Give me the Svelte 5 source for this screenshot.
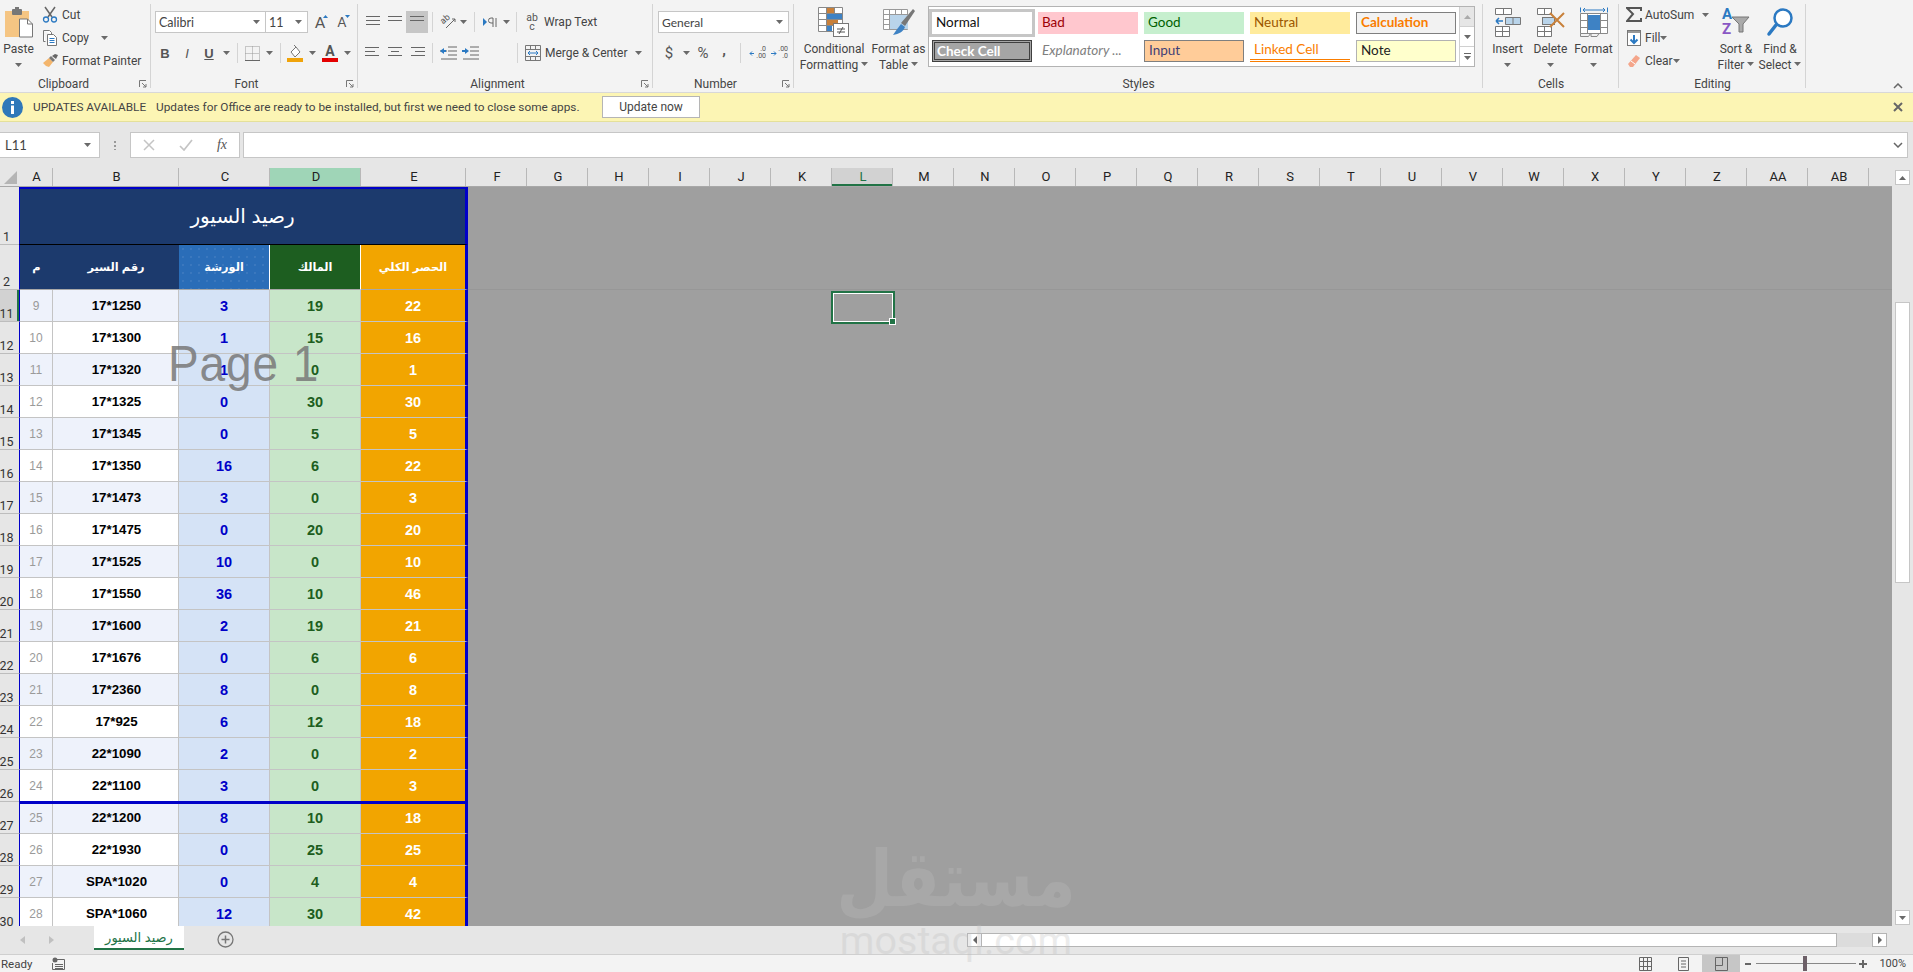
<script>
	const cols = [
		{ n: 'A', w: 34 },
		{ n: 'B', w: 126 },
		{ n: 'C', w: 91 },
		{ n: 'D', w: 91, cls: 'on' },
		{ n: 'E', w: 105 }
	];
	const rest = 'F G H I J K L M N O P Q R S T U V W X Y Z AA AB'.split(' ');

	const rows = [
		[11, 9, '17*1250', 3, 19, 22],
		[12, 10, '17*1300', 1, 15, 16],
		[13, 11, '17*1320', 1, 0, 1],
		[14, 12, '17*1325', 0, 30, 30],
		[15, 13, '17*1345', 0, 5, 5],
		[16, 14, '17*1350', 16, 6, 22],
		[17, 15, '17*1473', 3, 0, 3],
		[18, 16, '17*1475', 0, 20, 20],
		[19, 17, '17*1525', 10, 0, 10],
		[20, 18, '17*1550', 36, 10, 46],
		[21, 19, '17*1600', 2, 19, 21],
		[22, 20, '17*1676', 0, 6, 6],
		[23, 21, '17*2360', 8, 0, 8],
		[24, 22, '17*925', 6, 12, 18],
		[25, 23, '22*1090', 2, 0, 2],
		[26, 24, '22*1100', 3, 0, 3],
		[27, 25, '22*1200', 8, 10, 18],
		[28, 26, '22*1930', 0, 25, 25],
		[29, 27, 'SPA*1020', 0, 4, 4],
		[30, 28, 'SPA*1060', 12, 30, 42]
	];
</script>

{#snippet caret()}
	<svg class="caret" width="7" height="4" viewBox="0 0 7 4"><path d="M0 0h7L3.500 4z" fill="#6a6a6a" /></svg>
{/snippet}

{#snippet launcher()}
	<svg class="launch" width="8" height="8" viewBox="0 0 8 8">
		<path d="M.5 7V.5H7M3 3l4 4M7 4v3H4" fill="none" stroke="#777" />
	</svg>
{/snippet}

{#snippet lines(ws, anchor)}
	<svg width="18" height="14" viewBox="0 0 18 14">
		{#each ws as w, i}
			<rect x={anchor === 'l' ? 1 : anchor === 'r' ? 17 - w : 9 - w / 2} y={1 + i * 4} width={w} height="1" fill="#666" />
		{/each}
	</svg>
{/snippet}

<div class="app">
	<div class="ribbon">
		<section class="group" style="width:151px">
			<div class="body clip">
				<div class="big paste">
					<svg width="30" height="31" viewBox="0 0 30 31">
						<rect x="1" y="4" width="24" height="26" fill="#f5c583" />
						<rect x="8" y="2" width="10" height="6" rx="1" fill="#777" />
						<rect x="11" y="0" width="4" height="3" fill="#777" />
						<path d="M15.500 12h8l5 5v13h-13z" fill="#fff" stroke="#777" />
						<path d="M23.500 12v5h5" fill="none" stroke="#777" />
					</svg>
					<span>Paste</span>
					{@render caret()}
				</div>
				<div class="stack">
					<div class="row">
						<span class="mini">
							<svg width="16" height="17" viewBox="0 0 16 17">
								<path d="M3 1l7 10M13 1L6 11" stroke="#666" stroke-width="1.500" fill="none" />
								<circle cx="4" cy="13.500" r="2.500" fill="none" stroke="#2b79c2" stroke-width="1.300" />
								<circle cx="12" cy="13.500" r="2.500" fill="none" stroke="#2b79c2" stroke-width="1.300" />
							</svg>
						</span>
						<span>Cut</span>
					</div>
					<div class="row">
						<span class="mini">
							<svg width="16" height="16" viewBox="0 0 16 16">
								<path d="M1.500.500h6l2 2v2M3.500 11.500h-2V.500" fill="#fff" stroke="#777" />
								<path d="M5.500 4.500h6l3 3v8h-9z" fill="#fff" stroke="#777" />
								<path d="M7.500 8.500h5M7.500 10.500h5M7.500 12.500h5" stroke="#2b79c2" />
							</svg>
						</span>
						<span>Copy</span>
						<span class="gap">{@render caret()}</span>
					</div>
					<div class="row">
						<span class="mini">
							<svg width="17" height="15" viewBox="0 0 17 15">
								<path d="M1 10l6-5 4 4-4 5-3-1z" fill="#f3b56c" />
								<path d="M7 5l2-2 4 4-2 2z" fill="#777" />
								<path d="M10 3l3-2 3 1-2 4z" fill="#666" />
							</svg>
						</span>
						<span>Format Painter</span>
					</div>
				</div>
			</div>
			<div class="label clip-label">Clipboard{@render launcher()}</div>
		</section>

		<section class="group" style="width:207px">
			<div class="body tools">
				<div class="row">
					<div class="combo fontname"><span>Calibri</span>{@render caret()}</div>
					<div class="combo fontsize"><span>11</span>{@render caret()}</div>
					<span class="ib grow">A<svg width="5" height="3" viewBox="0 0 5 3"><path d="M0 3h5L2.500 0z" fill="#2b79c2" /></svg></span>
					<span class="ib grow small">A<svg width="5" height="3" viewBox="0 0 5 3"><path d="M0 0h5L2.500 3z" fill="#2b79c2" /></svg></span>
				</div>
				<div class="row shift">
					<span class="ib b">B</span>
					<span class="ib i">I</span>
					<span class="ib u">U</span>
					<span class="cw">{@render caret()}</span>
					<i class="sep"></i>
					<span class="ib mr3">
						<svg width="15" height="15" viewBox="0 0 15 15"><path d="M.500.500h14v14H.500zM7.500.500v14M.500 7.500h14" fill="none" stroke="#999" stroke-dasharray="1 1" /><path d="M0 14.500h15" stroke="#666" /></svg>
					</span>
					<span class="cw">{@render caret()}</span>
					<i class="sep"></i>
					<span class="ib mr3">
						<svg width="17" height="18" viewBox="0 0 17 18">
							<path d="M4 8l5-5 4 5-5 5z" fill="#fff" stroke="#777" />
							<path d="M9 3L7 1" stroke="#777" />
							<rect y="14" width="16" height="4" fill="#f0a30a" />
						</svg>
					</span>
					<span class="cw">{@render caret()}</span>
					<span class="ib ml1 color">A<i></i></span>
					<span class="cw">{@render caret()}</span>
				</div>
			</div>
			<div class="label launched">Font{@render launcher()}</div>
		</section>

		<section class="group" style="width:295px">
			<div class="body tools al">
				<div class="row">
					<span class="ib">{@render lines([14, 14, 14], 'c')}</span>
					<span class="ib">{@render lines([14, 14], 'c')}</span>
					<span class="ib active">{@render lines([14, 14], 'c')}</span>
					<i class="sep s4"></i>
					<span class="ib orient">
						<span class="ab">ab</span>
						<svg width="17" height="16" viewBox="0 0 17 16">
							<path d="M6 14L15 5M15 5h-3M15 5v3" stroke="#666" fill="none" />
						</svg>
					</span>
					<span class="cs">{@render caret()}</span>
					<i class="sep s7"></i>
					<span class="ib">
						<svg width="14" height="11" viewBox="0 0 14 11">
							<path d="M0 1l4 4-4 4z" fill="#2b79c2" />
							<path d="M10 1v9M13 1v9M10 1H8a2 2 0 0 0 0 5h2" fill="none" stroke="#666" />
						</svg>
					</span>
					<span class="cs2">{@render caret()}</span>
					<i class="sep s6"></i>
					<span class="ib abc">ab<br />c</span>
					<span class="tx">Wrap Text</span>
				</div>
				<div class="row">
					<span class="ib">{@render lines([14, 10, 14], 'l')}</span>
					<span class="ib">{@render lines([14, 8, 14], 'c')}</span>
					<span class="ib">{@render lines([14, 10, 14], 'r')}</span>
					<i class="sep s4"></i>
					<span class="ib">
						<svg width="17" height="14" viewBox="0 0 17 14">
							<path d="M8 1h9M8 5h9M8 9h9M1 13h16M0 5h7" stroke="#666" fill="none" />
							<path d="M0 5l4-3v6z" fill="#2b79c2" />
							<path d="M1 5h5" stroke="#2b79c2" stroke-width="2" />
						</svg>
					</span>
					<span class="ib">
						<svg width="17" height="14" viewBox="0 0 17 14">
							<path d="M8 1h9M8 5h9M8 9h9M1 13h16" stroke="#666" fill="none" />
							<path d="M7 5L3 2v6z" fill="#2b79c2" />
							<path d="M0 5h5" stroke="#2b79c2" stroke-width="2" />
						</svg>
					</span>
					<i class="sep s36"></i>
					<span class="ib">
						<svg width="16" height="16" viewBox="0 0 16 16">
							<path d="M.500.500h15v15H.500zM.500 4.500h15M.500 11.500h15M5.500.500v4M10.500.500v4M5.500 11.500v4M10.500 11.500v4" fill="none" stroke="#777" />
							<path d="M3 8h10M3 8l2-2M3 8l2 2M13 8l-2-2M13 8l-2 2" stroke="#2b79c2" fill="none" />
						</svg>
					</span>
					<span class="tx">Merge &amp; Center</span>
					<span class="cm">{@render caret()}</span>
				</div>
			</div>
			<div class="label launched">Alignment{@render launcher()}</div>
		</section>

		<section class="group" style="width:141px">
			<div class="body tools num">
				<div class="row">
					<div class="combo general"><span>General</span>{@render caret()}</div>
				</div>
				<div class="row">
					<span class="ib sym">$</span>
					<span class="cw">{@render caret()}</span>
					<span class="ib sym">%</span>
					<span class="ib sym comma">,</span>
					<i class="sep s5"></i>
					<span class="ib dec">
						<span class="dd"><b>.0</b><b>.00</b></span>
						<svg width="6" height="7" viewBox="0 0 6 7"><path d="M5 3.500H1M1 3.500l2-2M1 3.500l2 2" stroke="#2b79c2" fill="none" /></svg>
					</span>
					<span class="ib dec">
						<span class="dd"><b>.00</b><b>.0</b></span>
						<svg width="6" height="7" viewBox="0 0 6 7"><path d="M0 3.500h5M5 3.500l-2-2M5 3.500l-2 2" stroke="#2b79c2" fill="none" /></svg>
					</span>
				</div>
			</div>
			<div class="label launched">Number{@render launcher()}</div>
		</section>

		<section class="group" style="width:689px">
			<div class="body styles">
				<div class="big cf">
					<svg width="32" height="31" viewBox="0 0 32 31">
						<path d="M.500.500h24v24H.500zM.500 6.500h24M.500 12.500h24M.500 18.500h24M8.500.500v24M16.500.500v24" fill="#fff" stroke="#888" />
						<rect x="9" y="1" width="7" height="5" fill="#c8803a" />
						<rect x="9" y="7" width="15" height="5" fill="#3e82c4" />
						<rect x="9" y="13" width="11" height="5" fill="#c8803a" />
						<rect x="9" y="19" width="5" height="5" fill="#3e82c4" />
						<rect x="15.500" y="16.500" width="15" height="13" fill="#fff" stroke="#777" />
						<path d="M19 22h8M19 25h8M25 20l-4 7" stroke="#555" fill="none" />
					</svg>
					<span>Conditional</span>
					<span>Formatting {@render caret()}</span>
				</div>
				<div class="big ft">
					<svg width="32" height="31" viewBox="0 0 32 31">
						<path d="M.500 2.500h24v20H.500zM.500 7.500h24M.500 12.500h24M.500 17.500h24M6.500 2.500v20M12.500 2.500v20M18.500 2.500v20" fill="#fff" stroke="#999" />
						<rect x="7" y="8" width="18" height="14" fill="#b9d4ea" />
						<path d="M30 2l2 2-10 15-4-3z" fill="#777" />
						<path d="M18 17l4 3c-2 5-6 7-12 8 2-3 4-6 8-11z" fill="#3e82c4" />
					</svg>
					<span>Format as</span>
					<span>Table {@render caret()}</span>
				</div>
				<div class="gallery">
					<div class="swatches">
						<div class="sw normal">Normal</div>
						<div class="sw bad">Bad</div>
						<div class="sw good">Good</div>
						<div class="sw neutral">Neutral</div>
						<div class="sw calc">Calculation</div>
						<div class="sw check">Check Cell</div>
						<div class="sw expl">Explanatory ...</div>
						<div class="sw input">Input</div>
						<div class="sw linked">Linked Cell</div>
						<div class="sw note">Note</div>
					</div>
					<div class="spin">
						<span class="off"><svg width="7" height="4" viewBox="0 0 7 4"><path d="M0 4h7L3.500 0z" fill="#aaa" /></svg></span>
						<span>{@render caret()}</span>
						<span class="more"><i></i>{@render caret()}</span>
					</div>
				</div>
			</div>
			<div class="label">Styles</div>
		</section>

		<section class="group" style="width:136px">
			<div class="body cells">
				<div class="big">
					<svg width="28" height="31" viewBox="0 0 28 31">
						<path d="M1.500 1.500h16v6h-16zM9.500 1.500v6M1.500 19.500h14v10h-14zM1.500 24.500h14M8.500 19.500v10" fill="#fff" stroke="#777" />
						<path d="M11.500 10.500h15v7h-15zM19 10.500v7" fill="#b9d4ea" stroke="#777" />
						<path d="M9 14H2M2 14l3-3M2 14l3 3" stroke="#2b79c2" stroke-width="1.500" fill="none" />
					</svg>
					<span>Insert</span>
					{@render caret()}
				</div>
				<div class="big">
					<svg width="30" height="31" viewBox="0 0 30 31">
						<path d="M1.500 1.500h14v6h-14zM8.500 1.500v6M1.500 19.500h14v10h-14zM1.500 24.500h14M8.500 19.500v10" fill="#fff" stroke="#777" />
						<rect x="6.500" y="10.500" width="12" height="7" fill="#b9d4ea" stroke="#777" />
						<path d="M14 6l14 14M28 6L14 20" stroke="#c8803a" stroke-width="2" />
					</svg>
					<span>Delete</span>
					{@render caret()}
				</div>
				<div class="big">
					<svg width="28" height="31" viewBox="0 0 28 31">
						<path d="M.500.500v5M27.500.500v5M3 3h22M3 3l2-2M3 3l2 2M25 3l-2-2M25 3l-2 2" stroke="#2b79c2" fill="none" />
						<path d="M.500 6.500h27v20H.500zM.500 13.500h27M.500 20.500h27M7.500 6.500v20M20.500 6.500v20" fill="#fff" stroke="#888" />
						<rect x="8" y="8" width="12" height="15" fill="#3e82c4" />
						<path d="M.500 26.500v3h8l2-3M11 26.500v3h6l2-3" fill="none" stroke="#888" />
					</svg>
					<span>Format</span>
					{@render caret()}
				</div>
			</div>
			<div class="label">Cells</div>
		</section>

		<section class="group" style="width:187px">
			<div class="body edit">
				<div class="stack">
					<div class="row">
						<span class="mini tight">
							<svg width="16" height="15" viewBox="0 0 16 15"><path d="M15 4V1H1l6 6-6 7h14v-3" fill="none" stroke="#555" stroke-width="2" /></svg>
						</span>
						<span>AutoSum</span>
						<span class="gap auto">{@render caret()}</span>
					</div>
					<div class="row">
						<span class="mini tight">
							<svg width="14" height="16" viewBox="0 0 14 16">
								<rect x=".500" y=".500" width="13" height="15" fill="#fff" stroke="#777" />
								<path d="M1 1h12v2H1z" fill="#999" />
								<path d="M7 5v8M3.500 9.500L7 13l3.500-3.500" stroke="#2b79c2" stroke-width="2" fill="none" />
							</svg>
						</span>
						<span>Fill</span>
						{@render caret()}
					</div>
					<div class="row">
						<span class="mini tight">
							<svg width="14" height="14" viewBox="0 0 14 14"><path d="M1 10l8-9 4 3-7 9-3 0z" fill="#f4a58a" /><path d="M4 7l4 3" stroke="#fff" /></svg>
						</span>
						<span>Clear</span>
						{@render caret()}
					</div>
				</div>
				<div class="big sort">
					<div class="az">
						<span class="azl"><b class="a">A</b><b class="z">Z</b></span>
						<svg width="19" height="17" viewBox="0 0 19 17"><path d="M1 1h17l-6 7v8h-4V8z" fill="#aaa" stroke="#777" /></svg>
					</div>
					<span>Sort &amp;</span>
					<span>Filter {@render caret()}</span>
				</div>
				<div class="big find">
					<svg width="28" height="31" viewBox="0 0 28 31">
						<circle cx="17" cy="11" r="8.500" fill="#fff" stroke="#2b79c2" stroke-width="2.500" />
						<path d="M10 18l-7 9" stroke="#2b79c2" stroke-width="3.500" stroke-linecap="round" />
					</svg>
					<span>Find &amp;</span>
					<span>Select {@render caret()}</span>
				</div>
			</div>
			<div class="label">Editing</div>
		</section>

		<div class="collapse">
			<svg width="10" height="6" viewBox="0 0 10 6"><path d="M1 5l4-4 4 4" fill="none" stroke="#666" stroke-width="1.500" /></svg>
		</div>
	</div>

	<div class="msgbar">
		<svg class="info" width="21" height="21" viewBox="0 0 21 21">
			<circle cx="10.500" cy="10.500" r="10.500" fill="#2f78b9" />
			<rect x="9" y="4" width="3" height="3" fill="#fff" />
			<rect x="9" y="8.500" width="3" height="8.500" fill="#fff" />
		</svg>
		<span class="head">UPDATES AVAILABLE</span>
		<span class="msg">Updates for Office are ready to be installed, but first we need to close some apps.</span>
		<span class="update">Update now</span>
		<svg class="close" width="10" height="10" viewBox="0 0 10 10"><path d="M1 1l8 8M9 1L1 9" stroke="#666" stroke-width="2" /></svg>
	</div>

	<div class="fbar">
		<div class="namebox"><span>L11</span>{@render caret()}</div>
		<span class="dots"></span>
		<div class="fxbox">
			<svg width="12" height="12" viewBox="0 0 12 12"><path d="M1 1l10 10M11 1L1 11" stroke="#c4c4c4" stroke-width="1.500" /></svg>
			<svg width="14" height="12" viewBox="0 0 14 12"><path d="M1 7l4 4 8-10" fill="none" stroke="#c4c4c4" stroke-width="1.700" /></svg>
			<span class="fx">fx</span>
		</div>
		<div class="finput">
			<svg width="10" height="6" viewBox="0 0 10 6"><path d="M1 1l4 4 4-4" fill="none" stroke="#666" stroke-width="1.500" /></svg>
		</div>
	</div>

	<div class="main">
		<div class="sheet">
			<div class="colhead">
				<div class="corner"><svg width="13" height="13" viewBox="0 0 13 13"><path d="M13 0v13H0z" fill="#b5b5b5" /></svg></div>
				{#each cols as c}
					<div class="ch {c.cls ?? ''}" style="width:{c.w}px">{c.n}</div>
				{/each}
				{#each rest as c}
					<div class="ch wide" class:sel={c === 'L'}>{c}</div>
				{/each}
			</div>
			<div class="gridwrap">
				<div class="grid">
					<div class="rh">1</div>
					<div class="title">رصيد السيور</div>

					<div class="rh">2</div>
					<div class="th navy">م</div>
					<div class="th navy">رقم السير</div>
					<div class="th blue">الورشة</div>
					<div class="th green">المالك</div>
					<div class="th orange">الحصر الكلي</div>

					{#each rows as r, i}
						<div class="rh" class:cur={r[0] === 11}>{r[0]}</div>
						<div class="c idx" class:tint={i % 2 === 0}>{r[1]}</div>
						<div class="c code" class:tint={i % 2 === 0}>{r[2]}</div>
						<div class="c wks">{r[3]}</div>
						<div class="c own">{r[4]}</div>
						<div class="c tot">{r[5]}</div>
					{/each}
				</div>
				<div class="pagemark">Page 1</div>
				<div class="pagebreak"></div>

				<div class="rest">
					<div class="hline"></div>
					<div class="selcell"><i></i></div>
				</div>
			</div>
		</div>
		<div class="vscroll">
			<span class="sbtn"><svg width="7" height="4" viewBox="0 0 7 4"><path d="M0 4h7L3.500 0z" fill="#666" /></svg></span>
			<span class="vthumb"></span>
			<span class="sbtn down">{@render caret()}</span>
		</div>
	</div>

	<div class="tabs">
		<svg class="nav" width="5" height="8" viewBox="0 0 5 8"><path d="M5 0v8L0 4z" fill="#c0c0c0" /></svg>
		<svg class="nav next" width="5" height="8" viewBox="0 0 5 8"><path d="M0 0v8l5-4z" fill="#c0c0c0" /></svg>
		<div class="tab">رصيد السيور</div>
		<svg class="add" width="17" height="17" viewBox="0 0 17 17">
			<circle cx="8.500" cy="8.500" r="7.500" fill="none" stroke="#777" stroke-width="1.300" />
			<path d="M4.500 8.500h8M8.500 4.500v8" stroke="#777" stroke-width="1.500" />
		</svg>
		<div class="hscroll">
			<span class="hbtn"><svg width="4" height="8" viewBox="0 0 4 8"><path d="M4 0v8L0 4z" fill="#666" /></svg></span>
			<span class="hthumb"></span>
			<span class="hbtn end"><svg width="4" height="8" viewBox="0 0 4 8"><path d="M0 0v8l4-4z" fill="#666" /></svg></span>
		</div>
	</div>

	<div class="status">
		<span class="ready">Ready</span>
		<svg class="macro" width="13" height="13" viewBox="0 0 13 13">
			<circle cx="3" cy="3" r="2.500" fill="#666" />
			<path d="M5 2.500h7.500v10H.500V6M3 7.500h8M3 9.500h8M3 11.500h8" fill="none" stroke="#666" />
		</svg>
		<div class="views">
			<span class="view">
				<svg width="13" height="14" viewBox="0 0 13 14"><path d="M.500.500h12v13H.500zM.500 4.500h12M.500 9.500h12M4.500.500v13M8.500.500v13" fill="none" stroke="#666" /></svg>
			</span>
			<span class="view">
				<svg width="11" height="14" viewBox="0 0 11 14"><path d="M.500.500h10v13H.500zM3 4h5M3 7h5M3 10h5" fill="none" stroke="#666" /></svg>
			</span>
			<span class="view on">
				<svg width="13" height="14" viewBox="0 0 13 14"><path d="M.500.500h12v13H.500zM.500 8.500h7v-8" fill="none" stroke="#666" /></svg>
			</span>
		</div>
		<div class="zoom">
			<i class="zm"></i>
			<span class="slider"><i></i></span>
			<i class="zp"></i>
		</div>
		<span class="pct">100%</span>
	</div>

	<div class="stamp">
		<div class="stamp-ar"><span>مستقل</span></div>
		<div class="stamp-en">mostaql.com</div>
	</div>
</div>

<style>
	:global(body) {
		margin: 0;
	}
	.app {
		position: relative;
		display: flex;
		flex-direction: column;
		width: 1913px;
		height: 972px;
		overflow: hidden;
		background: #f3f3f3;
		font-family: Roboto, 'Liberation Sans', sans-serif;
		font-size: 12px;
		color: #444;
	}

	/* ribbon */
	.ribbon {
		display: flex;
		flex: none;
		height: 92px;
		background: #f3f3f3;
		position: relative;
	}
	.group {
		position: relative;
		flex: none;
		height: 92px;
	}
	.group::after {
		content: '';
		position: absolute;
		right: 0;
		top: 4px;
		bottom: 4px;
		width: 1px;
		background: #d4d4d4;
	}
	.body {
		height: 76px;
		box-sizing: border-box;
	}
	.label {
		height: 16px;
		line-height: 16px;
		text-align: center;
		color: #444;
	}
	.launched {
		padding-right: 16px;
	}
	.clip-label {
		padding-right: 24px;
	}
	.launch {
		position: absolute;
		right: 4px;
		bottom: 4px;
	}
	.row {
		display: flex;
		align-items: center;
		white-space: nowrap;
	}
	.caret {
		display: inline-block;
		vertical-align: middle;
		flex: none;
	}
	.big {
		display: flex;
		flex-direction: column;
		align-items: center;
		flex: none;
		line-height: 16px;
		white-space: nowrap;
	}
	.big svg:first-child {
		margin-bottom: 3px;
		flex: none;
	}
	.big > .caret {
		margin-top: 6px;
	}
	.stack {
		display: flex;
		flex-direction: column;
		padding-top: 3px;
	}
	.stack .row {
		height: 23px;
	}
	.mini {
		display: flex;
		justify-content: center;
		width: 18px;
		margin-right: 3px;
	}
	.gap {
		margin-left: 12px;
		display: flex;
	}

	.clip {
		display: flex;
		padding-top: 7px;
	}
	.paste {
		width: 37px;
	}
	.clip .stack {
		margin-left: 4px;
		padding-top: 0;
		margin-top: -4px;
	}

	.tools {
		padding: 11px 0 0 4px;
		display: flex;
		flex-direction: column;
		gap: 9px;
	}
	.tools .row {
		height: 22px;
	}
	.shift {
		margin-left: -1px;
	}
	.combo {
		display: flex;
		align-items: center;
		justify-content: space-between;
		box-sizing: border-box;
		height: 22px;
		padding: 0 5px 0 3px;
		background: #fff;
		border: 1px solid #c6c6c6;
		font-family: Lato, sans-serif;
		font-size: 12.500px;
		color: #444;
	}
	.fontname {
		width: 111px;
	}
	.fontsize {
		width: 42px;
		border-left: none;
		margin-right: 1px;
	}
	.general {
		width: 131px;
		font-size: 12px;
	}
	.ib {
		position: relative;
		display: flex;
		align-items: center;
		justify-content: center;
		flex: none;
		width: 22px;
		height: 22px;
		font-size: 14px;
		color: #555;
	}
	.grow {
		font-size: 15px;
		font-family: Lato, sans-serif;
	}
	.grow.small {
		font-size: 13px;
	}
	.grow svg {
		position: absolute;
		right: 3px;
		top: 4px;
	}
	.b {
		font-weight: 700;
		font-family: 'Liberation Sans', sans-serif;
		font-size: 13px;
	}
	.i {
		font-style: italic;
		font-family: 'Liberation Sans', sans-serif;
		font-size: 13px;
	}
	.u {
		font-weight: 700;
		text-decoration: underline;
		font-family: 'Liberation Sans', sans-serif;
		font-size: 13px;
	}
	.cw {
		display: flex;
		justify-content: center;
		width: 12px;
		flex: none;
	}
	.sep {
		flex: none;
		width: 1px;
		height: 20px;
		background: #d4d4d4;
		margin: 0 3px 0 5px;
	}
	.mr3 {
		margin-right: 3px;
	}
	.sep + .mr3 {
		margin-right: 0;
	}
	.ml1 {
		margin-left: 1px;
	}
	.color {
		flex-direction: column;
		font-weight: 700;
		font-size: 14px;
		line-height: 13px;
	}
	.color i {
		width: 16px;
		height: 4px;
		background: #e40000;
		display: block;
	}
	.active {
		background: #c6c6c6;
	}
	.s4 {
		margin: 0 4px;
	}
	.s5 {
		margin: 0 3px 0 5px;
	}
	.s6 {
		margin: 0 4px 0 5px;
	}
	.s7 {
		margin: 0 4px 0 6px;
	}
	.s36 {
		margin: 0 4px 0 36px;
	}
	.cs {
		display: flex;
		justify-content: center;
		width: 9px;
		flex: none;
	}
	.cs2 {
		display: flex;
		justify-content: center;
		width: 10px;
		flex: none;
	}
	.orient .ab {
		position: absolute;
		left: 3px;
		top: 3px;
		font-size: 9px;
		line-height: 10px;
		transform: rotate(-40deg);
	}
	.abc {
		font-size: 10.500px;
		line-height: 9px;
		display: block;
		padding-top: 2px;
		box-sizing: border-box;
		text-align: center;
	}
	.tx {
		margin-left: 1px;
	}
	.cm {
		margin-left: 8px;
		display: flex;
	}
	.al {
		padding-left: 4px;
	}
	.num {
		padding-left: 5px;
	}
	.sym {
		font-size: 15px;
	}
	.comma {
		margin-left: -1px;
		font-weight: 700;
		padding-bottom: 6px;
		box-sizing: border-box;
	}
	.dec {
		justify-content: flex-start;
		flex-direction: row-reverse;
		gap: 1px;
	}
	.dd {
		display: flex;
		flex-direction: column;
		align-items: flex-end;
		font-size: 7px;
		line-height: 7px;
	}
	.dd b {
		font-weight: 400;
	}

	.styles {
		display: flex;
		padding: 7px 0 0 5px;
	}
	.cf {
		width: 70px;
	}
	.ft {
		width: 59px;
	}
	.gallery {
		display: flex;
		box-sizing: border-box;
		width: 547px;
		height: 61px;
		margin-top: -1px;
		background: #fff;
		border: 1px solid #b3b3b3;
	}
	.swatches {
		display: grid;
		grid-template-columns: repeat(5, 100px);
		grid-auto-rows: 22px;
		gap: 6px;
		padding: 5px 0 0 3px;
	}
	.sw {
		box-sizing: border-box;
		display: flex;
		align-items: center;
		padding: 0 0 2px 4px;
		font-family: Lato, sans-serif;
		font-size: 13.500px;
		white-space: nowrap;
	}
	.normal {
		color: #111;
		outline: 3px solid #c6c6c6;
		margin-left: 0;
		width: 100px;
	}
	.bad {
		background: #ffc7ce;
		color: #9c0006;
	}
	.good {
		background: #c6efce;
		color: #006100;
	}
	.neutral {
		background: #ffeb9c;
		color: #9c5700;
	}
	.calc {
		background: #f2f2f2;
		color: #fa7d00;
		font-weight: 700;
		border: 1px solid #7f7f7f;
	}
	.check {
		background: #a5a5a5;
		color: #fff;
		font-weight: 700;
		border: 3px double #3f3f3f;
		padding: 0 0 0 2px;
	}
	.expl {
		color: #7f7f7f;
		font-style: italic;
	}
	.input {
		background: #ffcc99;
		color: #3f3f76;
		border: 1px solid #7f7f7f;
	}
	.linked {
		color: #fa7d00;
		border-bottom: 3px double #fa7d00;
	}
	.note {
		background: #ffffcc;
		color: #222;
		border: 1px solid #b2b2b2;
	}
	.spin {
		display: flex;
		flex-direction: column;
		width: 14px;
		margin-left: auto;
		border-left: 1px solid #d0d0d0;
	}
	.spin span {
		flex: 1;
		display: flex;
		flex-direction: column;
		align-items: center;
		justify-content: center;
		border-bottom: 1px solid #d0d0d0;
	}
	.spin .off {
		background: #e6e6e6;
	}
	.spin .more {
		border-bottom: none;
		gap: 2px;
	}
	.more i {
		width: 7px;
		height: 1px;
		background: #666;
	}

	.cells {
		display: flex;
		padding: 7px 0 0 3px;
	}
	.cells .big {
		width: 43px;
	}

	.edit {
		display: flex;
		padding-left: 6px;
	}
	.edit .stack {
		width: 89px;
	}
	.tight {
		margin-right: 2px;
	}
	.auto {
		margin-left: 8px;
	}
	.sort,
	.find {
		width: 44px;
		padding-top: 7px;
	}
	.az {
		display: flex;
		align-items: flex-start;
		height: 31px;
		margin-bottom: 3px;
	}
	.az svg {
		margin-top: 9px;
		margin-left: -1px;
	}
	.azl {
		display: flex;
		flex-direction: column;
		font-size: 15px;
		line-height: 15px;
	}
	.a {
		color: #2b79c2;
	}
	.z {
		color: #8a57c4;
	}
	.collapse {
		margin-left: 87px;
		padding-top: 78px;
	}

	/* message bar */
	.msgbar {
		display: flex;
		align-items: center;
		flex: none;
		box-sizing: border-box;
		height: 30px;
		padding-left: 2px;
		background: #fcf5b4;
		border-top: 1px solid #d8d8d8;
		border-bottom: 1px solid #e4e09a;
		color: #444;
	}
	.info {
		flex: none;
	}
	.head {
		margin-left: 10px;
		font-size: 11.800px;
	}
	.msg {
		margin-left: 10px;
		width: 446px;
		font-size: 11.800px;
		white-space: nowrap;
	}
	.update {
		box-sizing: border-box;
		width: 98px;
		height: 22px;
		line-height: 20px;
		text-align: center;
		background: #fff;
		border: 1px solid #b5b5b5;
	}
	.close {
		margin-left: auto;
		margin-right: 10px;
	}

	/* formula bar */
	.fbar {
		display: flex;
		align-items: flex-start;
		flex: none;
		box-sizing: border-box;
		height: 46px;
		padding-top: 10px;
		background: #e6e6e6;
	}
	.namebox {
		display: flex;
		align-items: center;
		justify-content: space-between;
		box-sizing: border-box;
		width: 100px;
		height: 26px;
		padding: 0 8px 0 5px;
		background: #fff;
		border: 1px solid #c6c6c6;
		border-left: none;
		font-family: Lato, sans-serif;
		font-size: 13px;
	}
	.dots {
		width: 2px;
		height: 10px;
		margin: 8px 14px;
		background: radial-gradient(circle, #999 1px, transparent 1px) 0 0 / 2px 4px;
	}
	.fxbox {
		display: flex;
		align-items: center;
		justify-content: space-between;
		box-sizing: border-box;
		width: 110px;
		height: 26px;
		padding: 0 12px;
		background: #fff;
		border: 1px solid #c6c6c6;
	}
	.fx {
		font-family: 'Liberation Serif', serif;
		font-style: italic;
		font-size: 14px;
		color: #555;
	}
	.finput {
		display: flex;
		align-items: center;
		justify-content: flex-end;
		box-sizing: border-box;
		width: 1665px;
		height: 26px;
		margin-left: 3px;
		padding-right: 4px;
		background: #fff;
		border: 1px solid #c6c6c6;
	}

	/* sheet */
	.main {
		display: flex;
		flex: none;
		height: 758px;
		background: #e6e6e6;
	}
	.sheet {
		display: flex;
		flex-direction: column;
		width: 1892px;
		flex: none;
		overflow: hidden;
	}
	.colhead {
		display: flex;
		flex: none;
		height: 19px;
		background: #e6e6e6;
		color: #222;
		font-size: 13px;
		border-bottom: 1px solid #a8a8a8;
		box-sizing: border-box;
	}
	.corner {
		display: flex;
		flex: none;
		align-items: flex-end;
		justify-content: flex-end;
		box-sizing: border-box;
		width: 19px;
		padding: 0 2px 2px 0;
	}
	.ch {
		box-sizing: border-box;
		padding-left: 2px;
		line-height: 18px;
		text-align: center;
		border-right: 1px solid #b8b8b8;
		flex: none;
	}
	.ch.wide {
		width: 61px;
	}
	.ch.on {
		background: #9fd5b7;
	}
	.ch.sel {
		background: #d2d2d2;
		color: #217346;
		box-shadow: inset 0 -2px 0 #217346;
	}
	.gridwrap {
		position: relative;
		display: flex;
		flex: 1;
		min-height: 0;
		overflow: hidden;
	}
	.grid {
		display: grid;
		grid-template-columns: 19px 34px 126px 91px 91px 107px;
		grid-template-rows: 58px 45px;
		grid-auto-rows: 32px;
		flex: none;
		background: #e6e6e6;
	}
	.rh {
		display: flex;
		align-items: flex-end;
		justify-content: center;
		box-sizing: border-box;
		padding: 0 6px 0 0;
		background: #e6e6e6;
		color: #333;
		font-size: 12.500px;
		line-height: 14px;
		border-bottom: 1px solid #bdbdbd;
		white-space: nowrap;
	}
	.rh.cur {
		background: #d2d2d2;
		box-shadow: inset -2px 0 0 #217346;
	}
	.title {
		grid-column: 2 / span 5;
		display: flex;
		align-items: center;
		justify-content: center;
		box-sizing: border-box;
		padding-bottom: 2px;
		background: #1c3a6d;
		color: #fff;
		font-family: 'Liberation Sans', 'DejaVu Sans', sans-serif;
		font-size: 20px;
		border-top: 2px solid #0000c8;
		border-left: 1px solid #0000c8;
		border-right: 3px solid #0000c8;
		border-bottom: 1px solid #000;
	}
	.th {
		display: flex;
		align-items: center;
		justify-content: center;
		box-sizing: border-box;
		color: #fff;
		font-family: 'Liberation Sans', 'DejaVu Sans', sans-serif;
		font-size: 11.300px;
		font-weight: 700;
		border-bottom: 1px solid #a8a8a8;
	}
	.navy {
		background: #1c3a6d;
	}
	.th:nth-child(4) {
		border-left: 1px solid #0000c8;
	}
	.blue {
		background: #2a6db8 radial-gradient(circle, rgba(255, 255, 255, 0.25) 0.5px, transparent 0.8px) 0 0 / 8px 8px;
		border-right: 1px solid #fff;
	}
	.green {
		background: #1d5e20;
		border-right: 1px solid #fff;
	}
	.orange {
		background: #f2a500;
		border-right: 3px solid #0000c8;
	}
	.c {
		display: flex;
		align-items: center;
		justify-content: center;
		box-sizing: border-box;
		border-right: 1px solid #c4c4c4;
		border-bottom: 1px solid #c4c4c4;
		font-family: 'Liberation Sans', sans-serif;
		font-size: 14.500px;
		font-weight: 700;
	}
	.idx {
		background: #fff;
		color: #9a9a9a;
		font-weight: 400;
		font-size: 12px;
		border-left: 1px solid #0000c8;
	}
	.code {
		background: #fff;
		color: #000;
		font-size: 13.300px;
		padding-left: 2px;
	}
	.tint {
		background: #eef2fb;
	}
	.wks {
		background: #d5e3f6;
		color: #0000c8;
	}
	.own {
		background: #c8e6c9;
		color: #1d5e20;
	}
	.tot {
		background: #f2a500;
		color: #fff;
		border-right: 3px solid #0000c8;
	}
	.pagemark {
		position: absolute;
		left: 168px;
		top: 147px;
		color: rgba(120, 120, 120, 0.85);
		font-family: 'Liberation Sans', sans-serif;
		font-size: 50px;
		line-height: 60px;
		letter-spacing: 1px;
		transform: scaleX(0.92);
		transform-origin: left;
		pointer-events: none;
		white-space: nowrap;
	}
	.pagebreak {
		position: absolute;
		left: 19px;
		top: 614px;
		width: 449px;
		height: 3px;
		background: #0000c8;
	}
	.rest {
		position: relative;
		flex: 1;
		background: #9f9f9f;
	}
	.hline {
		height: 103px;
		box-sizing: border-box;
		border-bottom: 1px solid #979797;
	}
	.selcell {
		position: absolute;
		left: 363px;
		top: 104px;
		box-sizing: border-box;
		width: 64px;
		height: 33px;
		border: 2px solid #217346;
		box-shadow: inset 0 0 0 1px #fff;
	}
	.selcell i {
		position: absolute;
		right: -3px;
		bottom: -3px;
		width: 5px;
		height: 5px;
		background: #217346;
		border: 1px solid #fff;
	}

	.vscroll {
		display: flex;
		flex-direction: column;
		align-items: center;
		flex: 1;
		box-sizing: border-box;
		padding: 2px 0 1px;
	}
	.sbtn {
		display: flex;
		align-items: center;
		justify-content: center;
		flex: none;
		box-sizing: border-box;
		width: 15px;
		height: 15px;
		background: #fff;
		border: 1px solid #c6c6c6;
	}
	.vthumb {
		flex: none;
		box-sizing: border-box;
		width: 15px;
		height: 281px;
		margin-top: 117px;
		background: #fff;
		border: 1px solid #c6c6c6;
	}
	.down {
		margin-top: auto;
	}

	/* tabs */
	.tabs {
		display: flex;
		align-items: flex-start;
		flex: none;
		box-sizing: border-box;
		height: 29px;
		background: #e6e6e6;
		border-bottom: 1px solid #cfcfcf;
	}
	.nav {
		margin: 10px 0 0 20px;
		flex: none;
	}
	.nav.next {
		margin-left: 24px;
	}
	.tab {
		flex: none;
		box-sizing: border-box;
		width: 90px;
		height: 24px;
		margin-left: 40px;
		background: #fff;
		border-bottom: 2px solid #217346;
		text-align: center;
		line-height: 23px;
		color: #217346;
		font-family: 'Liberation Sans', 'DejaVu Sans', sans-serif;
		font-size: 13px;
	}
	.add {
		flex: none;
		margin: 5px 0 0 33px;
	}
	.hscroll {
		display: flex;
		flex: none;
		box-sizing: border-box;
		width: 920px;
		height: 14px;
		margin: 7px 0 0 733px;
		background: #dcdcdc;
	}
	.hbtn {
		display: flex;
		align-items: center;
		justify-content: center;
		box-sizing: border-box;
		width: 15px;
		background: #fff;
		border: 1px solid #b5b5b5;
	}
	.hthumb {
		box-sizing: border-box;
		width: 855px;
		background: #fff;
		border: 1px solid #b5b5b5;
		border-left: none;
	}
	.hbtn.end {
		margin-left: auto;
	}

	/* status bar */
	.status {
		display: flex;
		align-items: center;
		flex: 1;
		min-height: 0;
		background: #f3f3f3;
		font-size: 11.500px;
	}
	.ready {
		margin-left: 1px;
	}
	.macro {
		margin-left: 20px;
	}
	.views {
		display: flex;
		margin-left: auto;
	}
	.view {
		display: flex;
		align-items: center;
		justify-content: center;
		width: 38px;
		height: 17px;
	}
	.view.on {
		background: #c6c6c6;
	}
	.zoom {
		display: flex;
		align-items: center;
		margin-left: 5px;
	}
	.zm {
		width: 6px;
		height: 2px;
		background: #666;
	}
	.slider {
		position: relative;
		width: 100px;
		height: 1px;
		margin: 0 3px 0 5px;
		background: #888;
	}
	.slider i {
		position: absolute;
		left: 47px;
		top: -7px;
		width: 4px;
		height: 15px;
		background: #6d6068;
	}
	.zp {
		position: relative;
		width: 8px;
		height: 2px;
		background: #666;
	}
	.zp::after {
		content: '';
		position: absolute;
		left: 3px;
		top: -3px;
		width: 2px;
		height: 8px;
		background: #666;
	}
	.pct {
		margin: 0 7px 0 12px;
		font-size: 11px;
	}

	/* watermark */
	.stamp {
		position: absolute;
		left: 838px;
		top: 838px;
		width: 236px;
		text-align: center;
		color: rgb(190, 190, 190);
		opacity: 0.3;
		pointer-events: none;
	}
	.stamp-ar {
		display: flex;
		justify-content: center;
		height: 82px;
		font-family: 'DejaVu Sans', sans-serif;
		font-size: 78px;
		line-height: 82px;
		font-weight: 700;
		white-space: nowrap;
		transform: scaleX(0.84);
	}
	.stamp-en {
		font-family: Roboto, sans-serif;
		font-size: 39.500px;
		line-height: 42px;
		white-space: nowrap;
	}
</style>
